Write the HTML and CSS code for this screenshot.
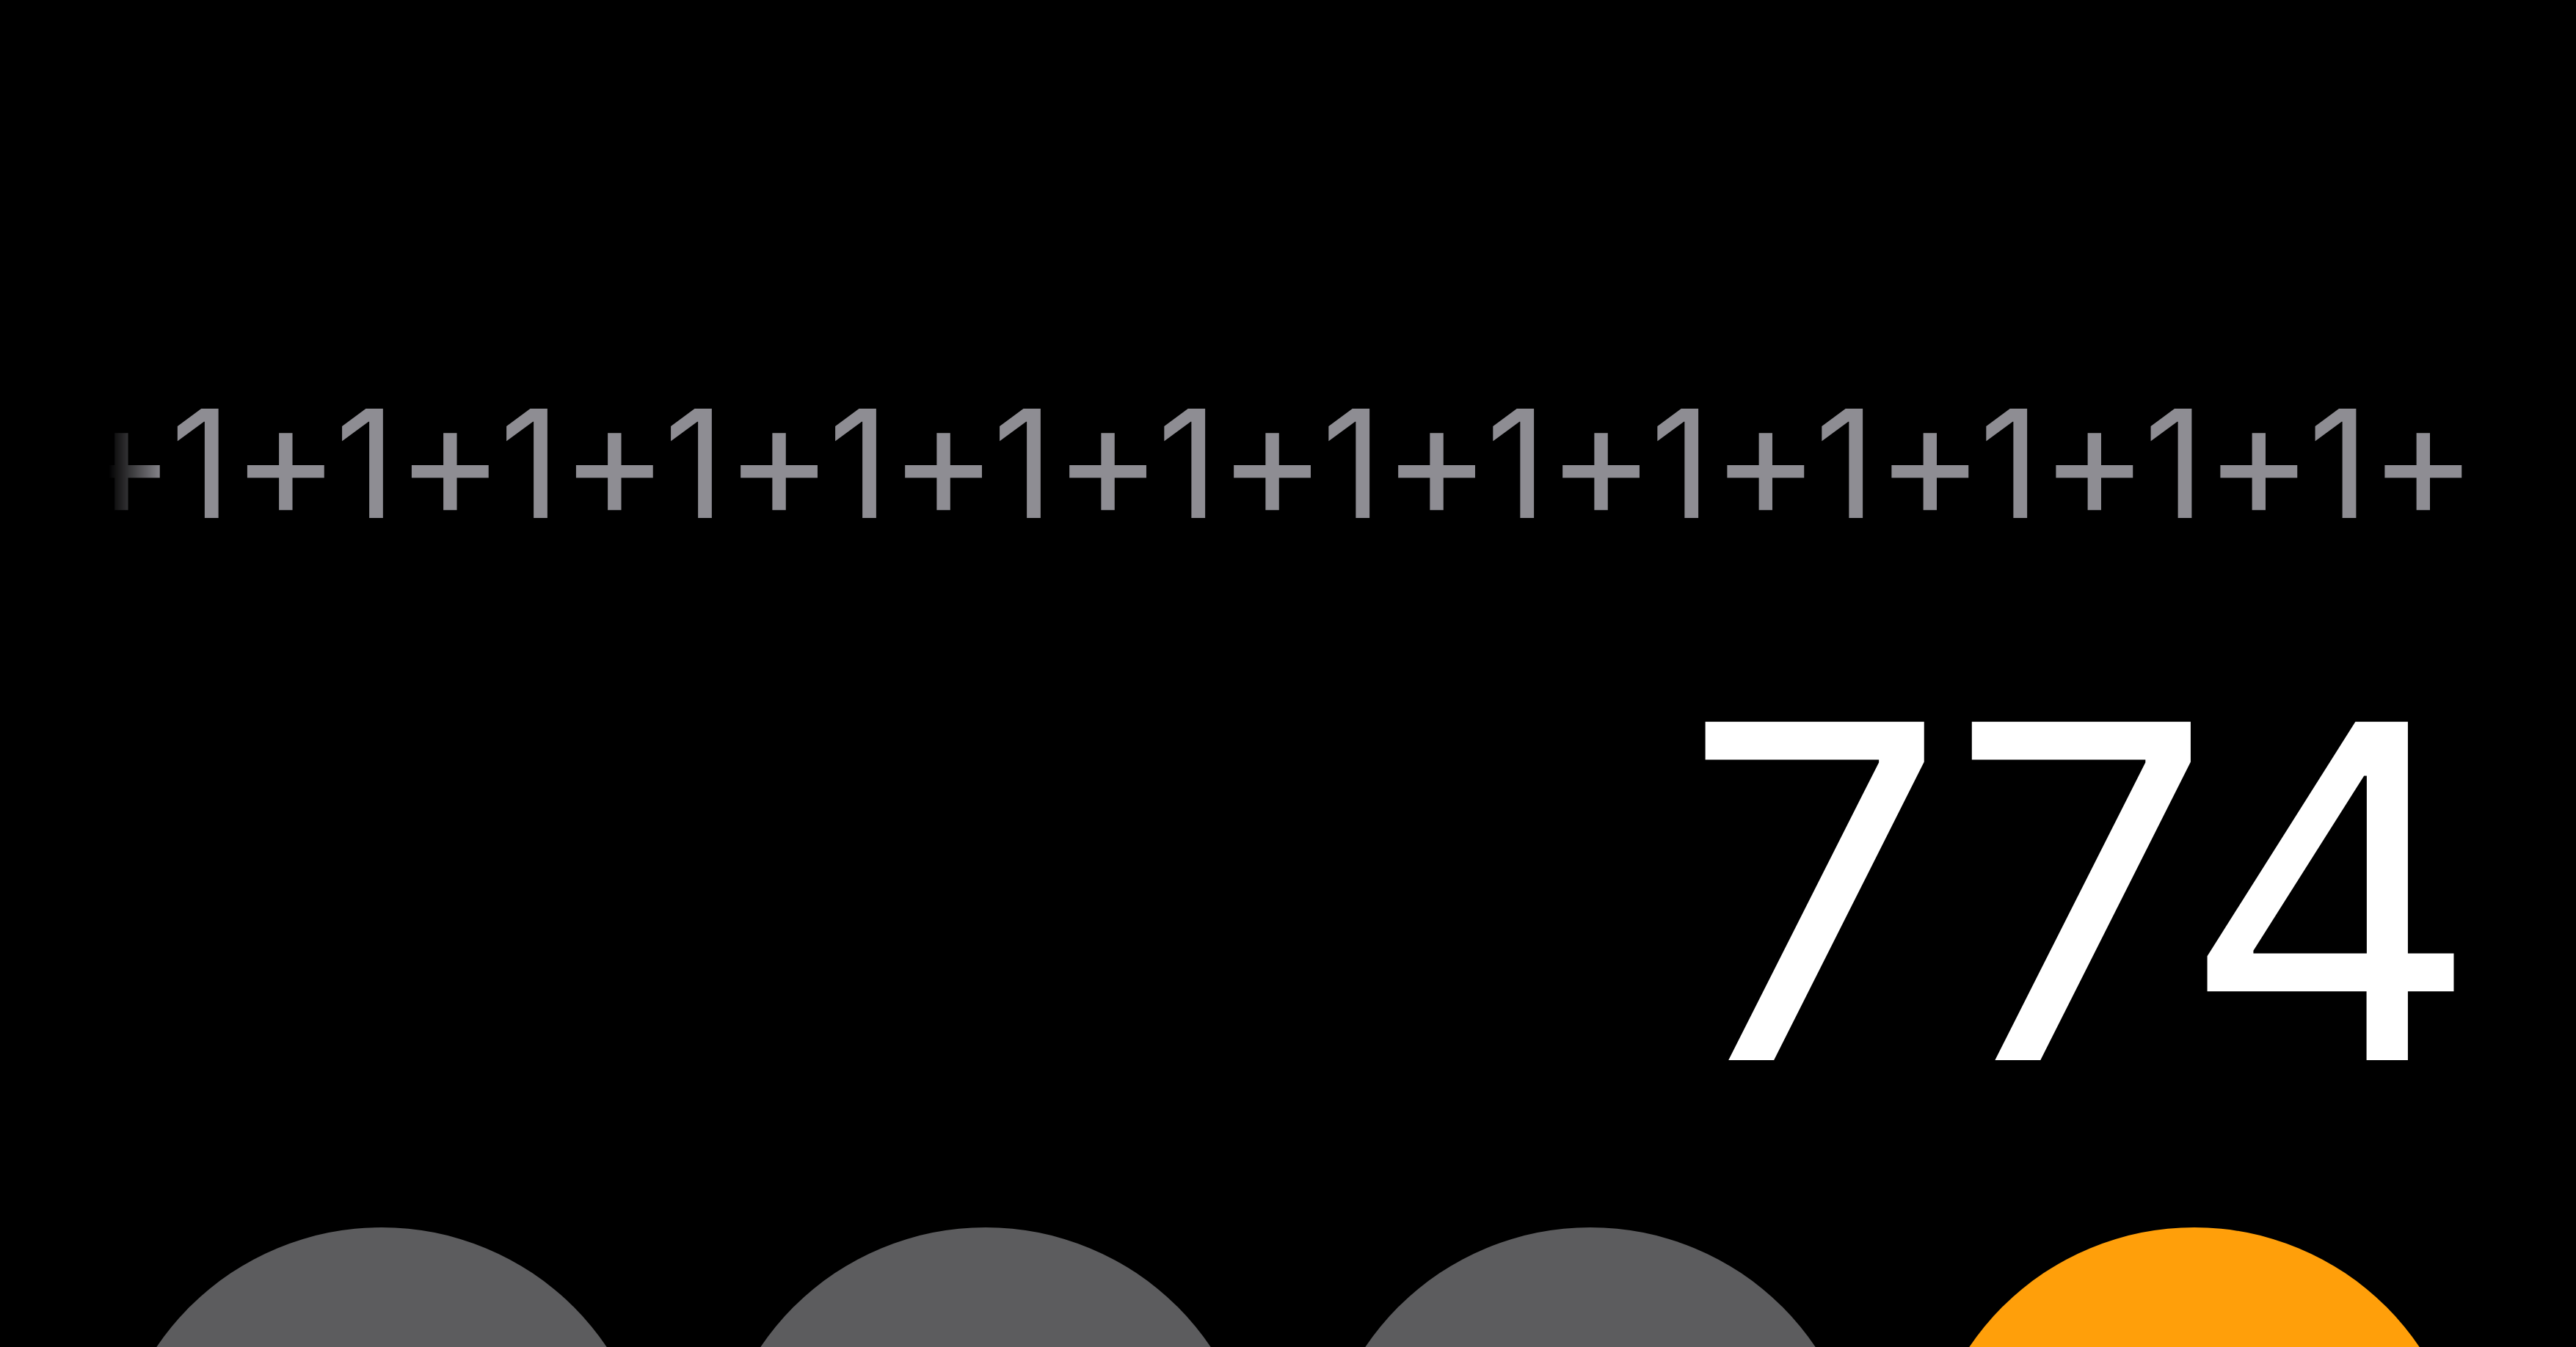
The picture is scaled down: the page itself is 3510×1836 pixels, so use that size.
FILE: index.html
```html
<!DOCTYPE html>
<html lang="en">
<head>
<meta charset="utf-8">
<title>Calculator</title>
<link rel="stylesheet" href="styles.css">
</head>
<body>
<main class="calc">
  <section class="display">
    <div class="expression-wrap">
      <div class="expression">1<span class="op">+</span>1<span class="op">+</span>1<span class="op">+</span>1<span class="op">+</span>1<span class="op">+</span>1<span class="op">+</span>1<span class="op">+</span>1<span class="op">+</span>1<span class="op">+</span>1<span class="op">+</span>1<span class="op">+</span>1<span class="op">+</span>1<span class="op">+</span>1<span class="op">+</span>1<span class="op">+</span>1<span class="op">+</span>1<span class="op">+</span>1<span class="op">+</span>1<span class="op">+</span>1<span class="op">+</span></div>
    </div>
    <div class="result">774</div>
  </section>
  <section class="keys">
    <div class="key key-gray"></div>
    <div class="key key-gray"></div>
    <div class="key key-gray"></div>
    <div class="key key-orange"></div>
  </section>
</main>
</body>
</html>
```
FILE: styles.css
```css
html, body {
  margin: 0;
  padding: 0;
  background: #000;
}
body {
  width: 3510px;
  height: 1836px;
  overflow: hidden;
  font-family: "Inter", "Roboto", "Liberation Sans", sans-serif;
}
.calc {
  display: flex;
  flex-direction: column;
  padding: 0 150px;
  height: 1836px;
  box-sizing: border-box;
  overflow: hidden;
}
.display {
  display: flex;
  flex-direction: column;
  align-items: stretch;
  padding-top: 529px;
}
.expression-wrap {
  height: 205px;
  margin-left: -2px;
  margin-right: -9px;
  overflow: hidden;
  display: flex;
  justify-content: flex-end;
  -webkit-mask-image: linear-gradient(to right, transparent 0, #000 75px);
  mask-image: linear-gradient(to right, transparent 0, #000 75px);
}
.expression {
  flex: none;
  white-space: nowrap;
  font-size: 205px;
  line-height: 205px;
  color: #8e8d93;
  font-weight: 400;
}
.op {
  font-size: 1.085em;
  line-height: 0;
  letter-spacing: -6.5px;
}
.result {
  margin-top: 164px;
  margin-right: -12px;
  text-align: right;
  font-size: 634px;
  line-height: 634px;
  letter-spacing: -8px;
  color: #fff;
  font-weight: 400;
}
.keys {
  margin-top: 141px;
  display: flex;
  justify-content: space-between;
}
.key {
  flex: none;
  width: 740px;
  height: 740px;
  border-radius: 50%;
}
.key-gray {
  background: #5c5c5e;
}
.key-orange {
  background: #ff9f0a;
}
```
